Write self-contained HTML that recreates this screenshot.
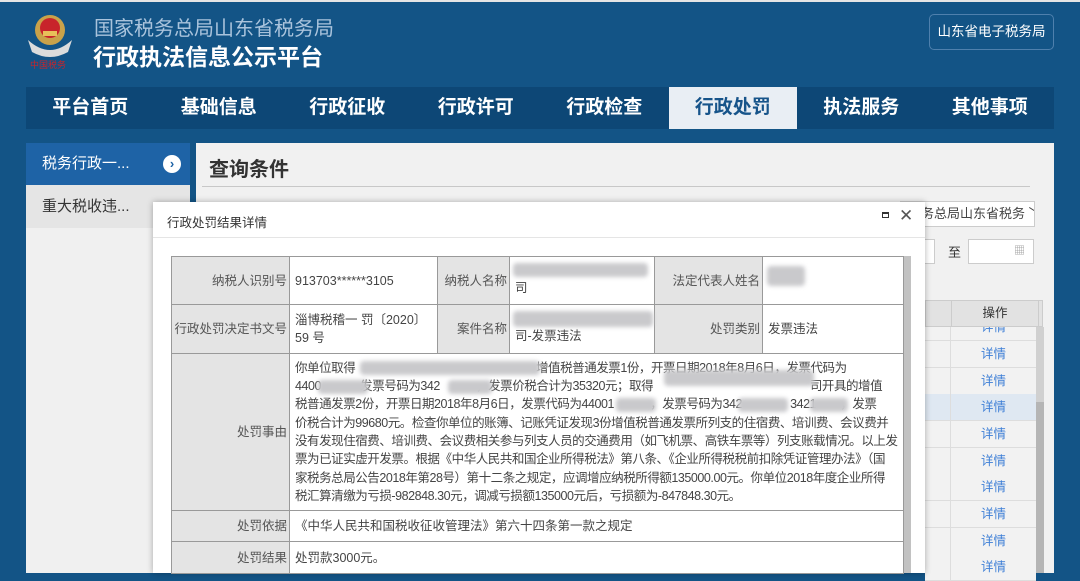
<!DOCTYPE html><html><head><meta charset="utf-8"><style>
*{margin:0;padding:0;box-sizing:border-box}
body{width:1080px;height:573px;overflow:hidden;background:#135486;font-family:"Liberation Sans","Noto Sans CJK SC",sans-serif;position:relative}
.a{position:absolute}
.nav{left:26px;top:87px;width:1028px;height:42px;background:#0d4776;display:flex}
.nav div{width:128.5px;text-align:center;line-height:42px;color:#fff;font-weight:bold;font-size:19px}
.nav .on{background:#e9eef4;color:#17548a}
.blur{position:absolute;background:#c9c9cc;filter:blur(2px);border-radius:4px}
table{border-collapse:collapse;font-size:12.5px;color:#444;table-layout:fixed}
td{border:1px solid #999;padding:0 5px;line-height:24px}
td.l{background:#e4e4e4;text-align:right;color:#555;white-space:nowrap;padding:0 2px}
.rr{position:absolute;left:925px;width:111px;height:26.6px;border-bottom:1px solid #ddd;background:#f2f2f2}
.rr span{position:absolute;left:25px;width:86px;text-align:center;line-height:26px;font-size:12.5px;color:#3e7fd6;border-left:1px solid #ddd;height:26px}
.w{white-space:nowrap;letter-spacing:-0.45px}
</style></head><body>
<div class="a" style="left:0;top:0;width:1080px;height:2px;background:#e5e5e5"></div>
<svg class="a" style="left:24px;top:10px" width="52" height="60" viewBox="0 0 52 60">
<circle cx="26" cy="20" r="15" fill="#c9a24a"/><circle cx="26" cy="18" r="10" fill="#c8242b"/><rect x="19" y="21" width="14" height="5" fill="#e8c15a"/>
<path d="M4 30 Q26 50 48 30 L44 42 Q26 52 8 42Z" fill="#dcdcdc"/><text x="6" y="58" font-size="9" fill="#c8242b" font-family="Noto Sans CJK SC">中国税务</text></svg>
<div class="a" style="left:94px;top:12px;color:#a9c3dc;font-size:20px">国家税务总局山东省税务局</div>
<div class="a" style="left:93px;top:38px;color:#fff;font-size:23px;font-weight:bold">行政执法信息公示平台</div>
<div class="a" style="left:929px;top:14px;width:125px;height:36px;border:1px solid #4f80ad;border-radius:5px;color:#fff;font-size:13.5px;line-height:34px;text-align:center">山东省电子税务局</div>
<div class="a nav"><div>平台首页</div><div>基础信息</div><div>行政征收</div><div>行政许可</div><div>行政检查</div><div class="on">行政处罚</div><div>执法服务</div><div>其他事项</div></div>
<div class="a" style="left:26px;top:143px;width:164px;height:42px;background:#1e63a6;color:#fff;font-size:15px;line-height:42px;padding-left:16px">税务行政一...<span style="position:absolute;left:137px;top:12px;width:18px;height:18px;border-radius:50%;background:#fff;color:#1e63a6;font-size:13px;line-height:18px;text-align:center;font-weight:bold">›</span></div>
<div class="a" style="left:26px;top:185px;width:164px;height:43px;background:#e5e5e5;color:#333;font-size:15px;line-height:43px;padding-left:16px">重大税收违...</div>
<div class="a" style="left:26px;top:228px;width:164px;height:345px;background:#f0f0f0"></div>
<div class="a" style="left:196px;top:143px;width:858px;height:430px;background:#f1f1f1"></div>
<div class="a" style="left:209px;top:153px;font-size:20px;font-weight:bold;color:#333">查询条件</div>
<div class="a" style="left:202px;top:186px;width:828px;height:1px;background:#c8c8c8"></div>
<div class="a" style="left:900px;top:201px;width:135px;height:26px;border:1px solid #ccc;background:#fff;font-size:13px;color:#444;line-height:24px;padding-left:20px;overflow:hidden;white-space:nowrap">务总局山东省税务 ﹀</div>
<div class="a" style="left:900px;top:239px;width:35px;height:25px;border:1px solid #ccc;background:#fff"></div>
<div class="a" style="left:948px;top:242px;font-size:13px;color:#333">至</div>
<div class="a" style="left:968px;top:239px;width:66px;height:25px;border:1px solid #ccc;background:#fff;font-size:11px;color:#999;text-align:right;padding-right:8px;line-height:23px">▦</div>
<div class="rr" style="top:314px"><span>详情</span></div>
<div class="rr" style="top:341px"><span>详情</span></div>
<div class="rr" style="top:368px"><span>详情</span></div>
<div class="rr" style="top:394px;background:#dfe8f2"><span>详情</span></div>
<div class="rr" style="top:421px"><span>详情</span></div>
<div class="rr" style="top:448px"><span>详情</span></div>
<div class="rr" style="top:474px"><span>详情</span></div>
<div class="rr" style="top:501px"><span>详情</span></div>
<div class="rr" style="top:528px"><span>详情</span></div>
<div class="rr" style="top:554px"><span>详情</span></div>
<div class="a" style="left:925px;top:300px;width:118px;height:27px;background:#e2e2e2;border:1px solid #ccc"><span style="position:absolute;left:25px;width:88px;height:25px;border-left:1px solid #ccc;border-right:1px solid #ccc;text-align:center;line-height:25px;font-size:12.5px;color:#333">操作</span></div>
<div class="a" style="left:1036px;top:327px;width:8px;height:246px;background:#d0d0d0"></div>
<div class="a" style="left:1036px;top:402px;width:8px;height:171px;background:#b5b5b5"></div>
<div class="a" style="left:153px;top:202px;width:772px;height:371px;background:#fff;box-shadow:0 0 6px rgba(0,0,0,.3)"></div>
<div class="a" style="left:167px;top:212px;font-size:12.5px;color:#333">行政处罚结果详情</div>
<div class="a" style="left:882px;top:212px;width:7px;height:6px;border:1px solid #333;border-top-width:2px"></div>
<div class="a" style="left:899px;top:206px;font-size:17px;color:#555">✕</div>
<div class="a" style="left:153px;top:237px;width:772px;height:1px;background:#e5e5e5"></div>
<div class="a" style="left:903px;top:256px;width:8px;height:317px;background:#c2c2c2"></div>
<table class="a" style="left:171px;top:256px;width:733px">
<colgroup><col style="width:118px"><col style="width:148px"><col style="width:72px"><col style="width:145px"><col style="width:108px"><col></colgroup>
<tr style="height:48px"><td class="l">纳税人识别号</td><td>913703******3105</td><td class="l">纳税人名称</td><td style="line-height:18px;padding-top:14px">司</td><td class="l">法定代表人姓名</td><td></td></tr>
<tr style="height:49px"><td class="l">行政处罚决定书文号</td><td style="line-height:18px">淄博税稽一 罚〔2020〕<br>59 号</td><td class="l">案件名称</td><td style="line-height:18px;padding-top:14px">司-发票违法</td><td class="l">处罚类别</td><td>发票违法</td></tr>
<tr style="height:157px"><td class="l">处罚事由</td><td colspan="5" class="w" style="line-height:18.3px;padding:3px 5px">你单位取得　　　　　　　　　　　　　　　增值税普通发票1份，开票日期2018年8月6日，发票代码为<br>4400　　　 发票号码为342　　　，发票价税合计为35320元；取得　　　　　　　　　　　　　司开具的增值<br>税普通发票2份，开票日期2018年8月6日，发票代码为44001　　　，发票号码为342　　　　3421　　，发票<br>价税合计为99680元。检查你单位的账簿、记账凭证发现3份增值税普通发票所列支的住宿费、培训费、会议费并<br>没有发现住宿费、培训费、会议费相关参与列支人员的交通费用（如飞机票、高铁车票等）列支账载情况。以上发<br>票为已证实虚开发票。根据《中华人民共和国企业所得税法》第八条、《企业所得税税前扣除凭证管理办法》（国<br>家税务总局公告2018年第28号）第十二条之规定，应调增应纳税所得额135000.00元。你单位2018年度企业所得<br>税汇算清缴为亏损-982848.30元，调减亏损额135000元后，亏损额为-847848.30元。</td></tr>
<tr style="height:31px"><td class="l">处罚依据</td><td colspan="5">《中华人民共和国税收征收管理法》第六十四条第一款之规定</td></tr>
<tr style="height:32px"><td class="l">处罚结果</td><td colspan="5">处罚款3000元。</td></tr>
</table>
<div class="blur" style="left:513px;top:263px;width:135px;height:14px"></div>
<div class="blur" style="left:513px;top:311px;width:140px;height:16px"></div>
<div class="blur" style="left:767px;top:266px;width:38px;height:20px"></div>
<div class="blur" style="left:360px;top:361px;width:180px;height:14px"></div>
<div class="blur" style="left:318px;top:380px;width:50px;height:14px"></div>
<div class="blur" style="left:448px;top:380px;width:44px;height:14px"></div>
<div class="blur" style="left:664px;top:370px;width:150px;height:16px"></div>
<div class="blur" style="left:616px;top:398px;width:40px;height:14px"></div>
<div class="blur" style="left:738px;top:398px;width:50px;height:14px"></div>
<div class="blur" style="left:810px;top:398px;width:38px;height:14px"></div>
</body></html>
